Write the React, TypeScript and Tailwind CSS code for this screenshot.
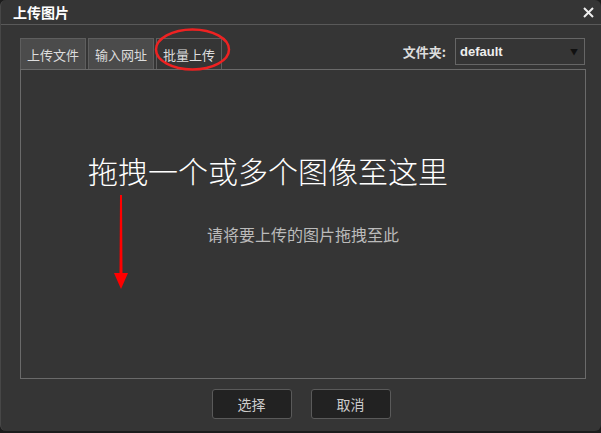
import { useState } from 'react';

const font = { fontFamily: '"Noto Sans CJK SC", "Liberation Sans", sans-serif' };

export default function App() {
    const [tab, setTab] = useState(2);
    const tabs = ['上传文件', '输入网址', '批量上传'];

    return (
        <div className="w-[601px] h-[433px] bg-[#1c1c1c] overflow-hidden" style={font}>
            {/* window */}
            <div className="relative h-[431px] rounded-[6px] bg-[#353535] border-l border-[#474747] flex flex-col">
                {/* title bar */}
                <div className="h-[25px] border-b border-[#595959] flex items-center justify-between pl-[12px] pr-[7px]">
                    <span className="text-[14px] font-bold text-white leading-none">上传图片</span>
                    <svg width="11" height="11" viewBox="0 0 11 11">
                        <path d="M1 1 L10 10 M10 1 L1 10" stroke="#eeeeee" strokeWidth="2" />
                    </svg>
                </div>

                {/* body */}
                <div className="pl-[19px] pr-[15px] pt-[13px]">
                    <div className="flex items-end justify-between h-[31px]">
                        <div className="flex gap-[2px]">
                            {tabs.map((t, i) => (
                                <button
                                    key={t}
                                    onClick={() => setTab(i)}
                                    className={`w-[66px] h-[31px] border border-b-0 border-[#5e5e5e] text-[13px] text-[#dddddd] leading-none ${i === tab ? 'bg-[#353535]' : 'bg-[#4b4b4b]'}`}
                                >
                                    {t}
                                </button>
                            ))}
                        </div>
                        <div className="flex items-center gap-[9px] self-start pr-[1px]">
                            <span className="text-[13px] font-bold text-[#dddddd]">文件夹:</span>
                            <div className="w-[130px] h-[27px] border border-[#666666] flex items-center justify-between pl-[4px] pr-[6px]">
                                <span className="text-[13px] font-bold text-[#eeeeee]" style={{ fontFamily: '"Liberation Sans", sans-serif' }}>default</span>
                                <span className="text-[8px] text-[#111111]">▼</span>
                            </div>
                        </div>
                    </div>

                    {/* drop area */}
                    <div className="relative h-[310px] border border-[#6a6a6a] flex flex-col">
                        <p className="ml-[67px] mt-[82px] text-[30px] leading-[36px] text-white font-light">拖拽一个或多个图像至这里</p>
                        <p className="mt-[36px] text-center text-[16px] leading-[20px] text-[#bbbbbb]">请将要上传的图片拖拽至此</p>
                        <svg className="absolute left-[92px] top-[125px]" width="16" height="95" viewBox="0 0 16 95">
                            <polygon points="7,0 9,0 9.5,78 15,78 8,94 1,78 6.5,78" fill="#ff0000" />
                        </svg>
                    </div>
                </div>

                {/* buttons */}
                <div className="flex justify-center gap-[19px] mt-[10px]">
                    <button className="w-[80px] h-[30px] rounded-[3px] bg-[#222222] border border-[#5a5a5a] text-[14px] text-[#cccccc]">选择</button>
                    <button className="w-[80px] h-[30px] rounded-[3px] bg-[#222222] border border-[#5a5a5a] text-[14px] text-[#cccccc]">取消</button>
                </div>

                {/* red annotation ellipse */}
                <svg className="absolute left-[152px] top-[27px]" width="80" height="46" viewBox="0 0 80 46">
                    <ellipse cx="39.5" cy="22.5" rx="36.5" ry="20" fill="none" stroke="#ee2222" strokeWidth="2.5" />
                </svg>
            </div>
        </div>
    );
}
